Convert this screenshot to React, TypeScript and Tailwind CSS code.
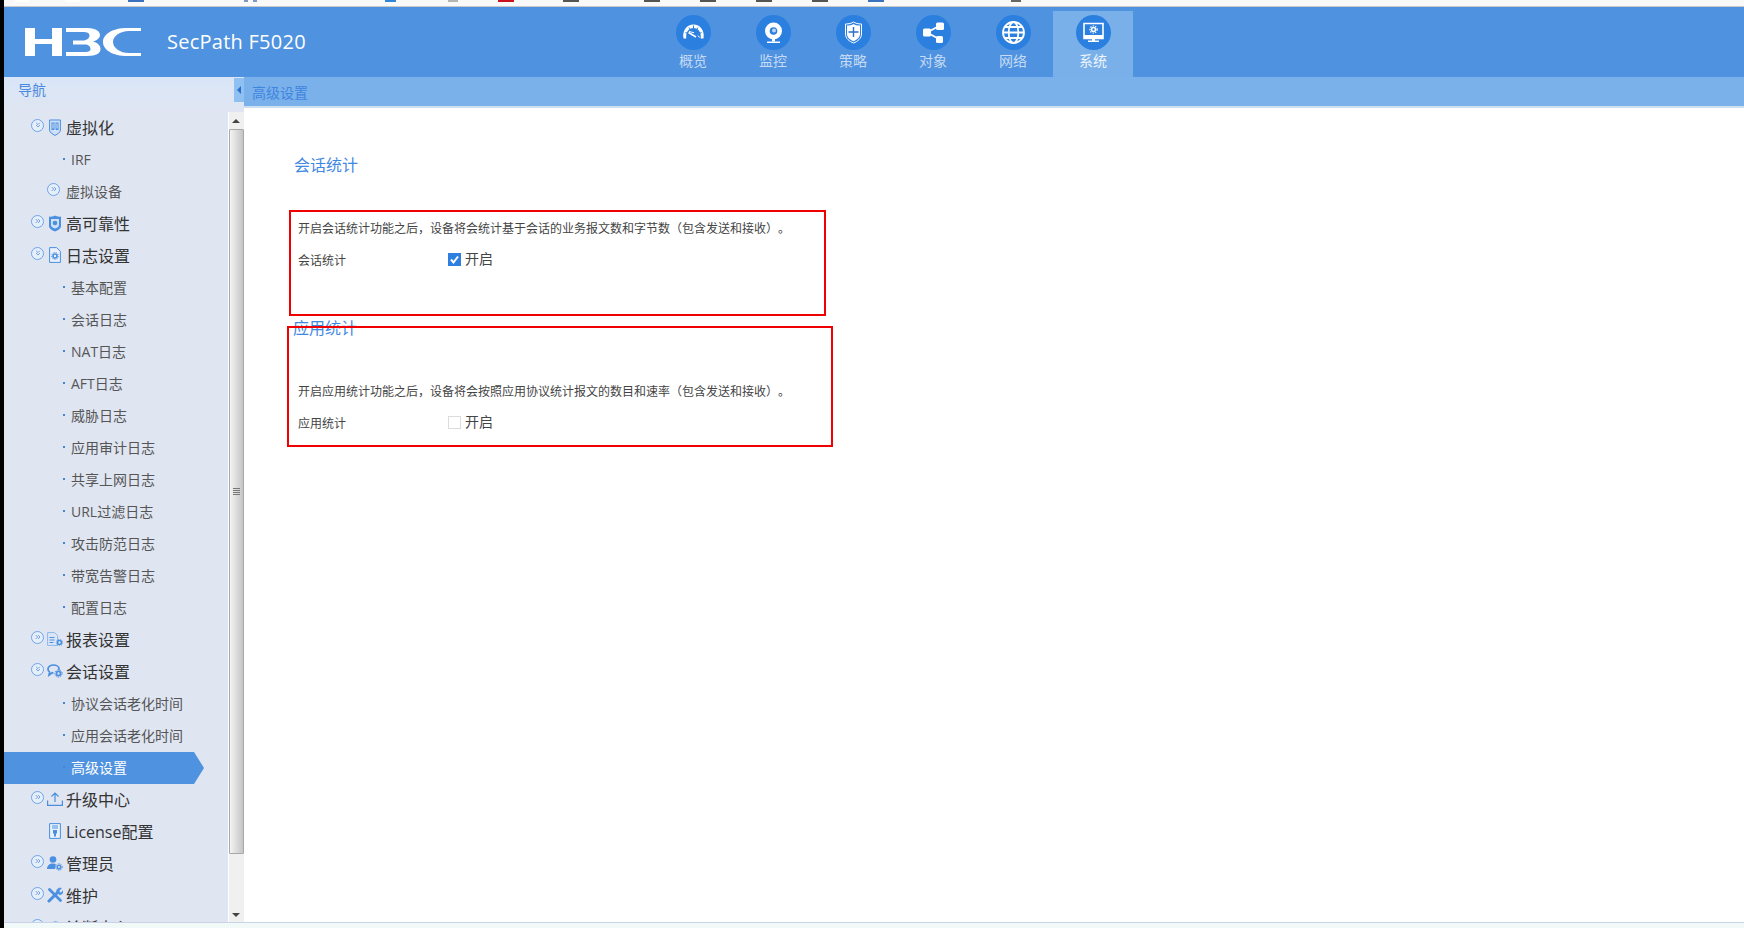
import React from "react";
import { ChevronsDown, ChevronsRight } from "lucide-react";

const BLUE = "#4a8fe0";

const IconShieldVm = () => (
  <svg viewBox="0 0 12 17" className="h-[17px] w-[12px]">
    <path d="M.6 1h10.800v10c0 2.500-2.700 4-5.400 5.400C3.300 15 .6 13.500.6 11z" fill="#cfe0f6" stroke={BLUE} />
    <path d="M2.500 3.500h7v7.500h-7z" fill={BLUE} />
    <path d="M6 3.500V12M4 4.500v5M8 4.500v5" stroke="#fff" strokeWidth="0.8" />
  </svg>
);
const IconShieldStar = () => (
  <svg viewBox="0 0 12 17" className="h-[17px] w-[12px]">
    <path d="M0 1.500C2.500 2 4.500 1.500 6 .5c1.500 1 3.500 1.500 6 1V11c0 2.500-3 4.500-6 5.500C3 15.500 0 13.500 0 11z" fill={BLUE} />
    <path d="M2 4h8v6.500c0 1-2 2.500-4 3-2-.5-4-2-4-3z" fill="#cfe0f6" />
    <circle cx="6" cy="8" r="2.300" fill={BLUE} />
  </svg>
);
const IconDocGear = () => (
  <svg viewBox="0 0 12 16" className="h-[16px] w-[12px]">
    <path d="M.6.6h7l3.800 3.800v11H.6z" fill="#eaf1fb" stroke={BLUE} />
    <circle cx="6" cy="9" r="2" fill="none" stroke={BLUE} strokeWidth="1.600" />
    <circle cx="6" cy="9" r="3.500" fill="none" stroke={BLUE} strokeWidth="0.900" strokeDasharray="1.200 1.200" />
  </svg>
);
const IconReport = () => (
  <svg viewBox="0 0 16 14" className="h-[14px] w-[16px]">
    <path d="M.6.6h7l3 3v9.800H.6z" fill="#dbe7f7" stroke="#8fb5e8" />
    <path d="M2.500 5.500h5M2.500 8h5M2.500 10.500h4" stroke={BLUE} />
    <circle cx="12.500" cy="10.500" r="2" fill="none" stroke={BLUE} strokeWidth="1.600" />
    <circle cx="12.500" cy="10.500" r="3.200" fill="none" stroke={BLUE} strokeWidth="0.800" strokeDasharray="1.100 1.100" />
  </svg>
);
const IconChatGear = () => (
  <svg viewBox="0 0 16 14" className="h-[14px] w-[16px]">
    <path d="M6.500 1c3 0 5.500 1.700 5.500 3.800 0 .4-.1.8-.3 1.200M6.500 8.800c-.4 0-.8 0-1.200-.1L2 11l.6-2.900C1.500 7.300 1 6.200 1 4.900 1 2.700 3.500 1 6.500 1" fill="none" stroke={BLUE} strokeWidth="1.700" />
    <circle cx="11.500" cy="9.500" r="2.100" fill="none" stroke={BLUE} strokeWidth="1.800" />
    <circle cx="11.500" cy="9.500" r="3.700" fill="none" stroke={BLUE} strokeWidth="1" strokeDasharray="1.300 1.300" />
  </svg>
);
const IconUpload = () => (
  <svg viewBox="0 0 16 14" className="h-[14px] w-[16px]" fill="none" stroke={BLUE} strokeWidth="1.200">
    <path d="M.6 8.500v4.900h14.800V8.500M8 10V1M4.500 4.500 8 1l3.500 3.500" />
  </svg>
);
const IconLicense = () => (
  <svg viewBox="0 0 12 16" className="h-[16px] w-[12px]">
    <path d="M.6.6h10.800v14.800H.6z" fill="#eaf1fb" stroke={BLUE} />
    <path d="M3 3h6M3 5h6" stroke={BLUE} />
    <path d="M4 7h4v3.500H7v3H5v-3H4z" fill={BLUE} />
  </svg>
);
const IconAdmin = () => (
  <svg viewBox="0 0 16 15" className="h-[15px] w-[16px]">
    <circle cx="6" cy="3.500" r="3.300" fill={BLUE} />
    <path d="M0 13c0-3.500 2.500-5.500 6-5.500 1 0 2 .2 2.800.6L8 13z" fill={BLUE} />
    <circle cx="12" cy="11" r="1.800" fill="none" stroke={BLUE} strokeWidth="1.500" />
    <circle cx="12" cy="11" r="3.300" fill="none" stroke={BLUE} strokeWidth="1" strokeDasharray="1.200 1.200" />
  </svg>
);
const IconTools = () => (
  <svg viewBox="0 0 16 16" className="h-[16px] w-[16px]" fill="none" stroke={BLUE} strokeLinecap="round">
    <path d="M2 14 11 5" strokeWidth="3" />
    <path d="M9.500 4c.4-2.200 2.800-3.700 5-2.700L12 3.700l.4 1.700 1.700.4 2-2.400c.6 2.200-1.200 4.600-3.700 4.300z" strokeWidth="0.500" fill={BLUE} />
    <path d="m2.500 2.500 11 11" strokeWidth="2.800" />
  </svg>
);
const IconPower = () => (
  <svg viewBox="0 0 16 16" className="h-[15px] w-[15px]" fill="none" stroke="#8fb5e8" strokeWidth="1.600">
    <circle cx="8" cy="8" r="6" />
    <path d="M8 1v7" />
  </svg>
);

type Row = {
  label: string;
  kind: "top" | "sub" | "group";
  open?: boolean;
  noToggle?: boolean;
  active?: boolean;
  icon?: React.ReactNode;
};

const rows: Row[] = [
  { label: "虚拟化", kind: "top", open: true, icon: <IconShieldVm /> },
  { label: "IRF", kind: "sub" },
  { label: "虚拟设备", kind: "group" },
  { label: "高可靠性", kind: "top", icon: <IconShieldStar /> },
  { label: "日志设置", kind: "top", open: true, icon: <IconDocGear /> },
  { label: "基本配置", kind: "sub" },
  { label: "会话日志", kind: "sub" },
  { label: "NAT日志", kind: "sub" },
  { label: "AFT日志", kind: "sub" },
  { label: "威胁日志", kind: "sub" },
  { label: "应用审计日志", kind: "sub" },
  { label: "共享上网日志", kind: "sub" },
  { label: "URL过滤日志", kind: "sub" },
  { label: "攻击防范日志", kind: "sub" },
  { label: "带宽告警日志", kind: "sub" },
  { label: "配置日志", kind: "sub" },
  { label: "报表设置", kind: "top", icon: <IconReport /> },
  { label: "会话设置", kind: "top", open: true, icon: <IconChatGear /> },
  { label: "协议会话老化时间", kind: "sub" },
  { label: "应用会话老化时间", kind: "sub" },
  { label: "高级设置", kind: "sub", active: true },
  { label: "升级中心", kind: "top", icon: <IconUpload /> },
  { label: "License配置", kind: "top", noToggle: true, icon: <IconLicense /> },
  { label: "管理员", kind: "top", icon: <IconAdmin /> },
  { label: "维护", kind: "top", icon: <IconTools /> },
  { label: "诊断中心", kind: "top", icon: <IconPower /> },
];

const Toggle = ({ open }: { open?: boolean }) => (
  <span className="mt-[-6px] flex h-[13px] w-[13px] shrink-0 items-center justify-center rounded-full border-[1.5px] border-[#6ea4e8] bg-[#e6eefa] text-[#6ea4e8]">
    {open ? <ChevronsDown size={8} strokeWidth={3} /> : <ChevronsRight size={8} strokeWidth={3} />}
  </span>
);

const NavRow = ({ row }: { row: Row }) => {
  if (row.kind === "sub") {
    return (
      <div
        className={
          row.active
            ? "flex h-8 w-[200px] items-center bg-[#4f92e0] pl-[59px] text-sm text-white [clip-path:polygon(0_0,190px_0,200px_50%,190px_100%,0_100%)]"
            : "flex h-8 items-center pl-[59px] text-sm text-[#555]"
        }
      >
        <span className="mt-[-2px] h-[2px] w-[2px] bg-[#3f85d8]" />
        <span className="ml-[6px] leading-none">{row.label}</span>
      </div>
    );
  }
  if (row.kind === "group") {
    return (
      <div className="flex h-8 items-center pl-[43px] text-sm text-[#555]">
        <Toggle />
        <span className="ml-[6px] leading-none">{row.label}</span>
      </div>
    );
  }
  return (
    <div className="flex h-8 items-center pl-[27px] text-base text-[#333]">
      {row.noToggle ? <span className="w-[13px]" /> : <Toggle open={row.open} />}
      <span className="ml-[3px] mr-[3px] flex w-[16px] shrink-0 items-center justify-center pb-[2px]">{row.icon}</span>
      <span className="leading-none">{row.label}</span>
    </div>
  );
};

const Scrollbar = () => (
  <div className="flex w-[16px] shrink-0 flex-col border-l border-white bg-[#f0f0f0]">
    <div className="flex h-[17px] items-center justify-center pr-[1px]">
      <span className="h-0 w-0 border-x-[4px] border-b-[4px] border-x-transparent border-b-[#444]" />
    </div>
    <div className="flex h-[725px] items-center justify-center rounded-[1px] border border-[#a8a8a8] bg-gradient-to-r from-[#f4f4f4] via-[#dcdcdc] to-[#c4c4c8] pr-[1px]">
      <div className="flex w-[7px] flex-col gap-px">
        <span className="h-px bg-[#777]" />
        <span className="h-px bg-[#777]" />
        <span className="h-px bg-[#777]" />
        <span className="h-px bg-[#777]" />
      </div>
    </div>
    <div className="flex flex-1 items-end justify-center pb-[5px] pr-[1px]">
      <span className="h-0 w-0 border-x-[4px] border-t-[4px] border-x-transparent border-t-[#444]" />
    </div>
  </div>
);

const Sidebar = () => (
  <aside className="relative flex w-[240px] shrink-0 flex-col bg-[#dfe5f1]">
    <div className="flex h-[35px] shrink-0 items-start bg-gradient-to-b from-[#d9e6f8] to-[#dfe5f1] pl-[14px] pt-[3px] text-sm text-[#4a8ae0]">
      导航
    </div>
    <div className="absolute right-0 top-[1px] flex h-[24px] w-[10px] items-center justify-center bg-[#8fc0f2]">
      <span className="h-0 w-0 border-y-[4px] border-r-[4px] border-y-transparent border-r-[#2b6fc9]" />
    </div>
    <div className="flex min-h-0 flex-1">
      <div className="min-w-0 flex-1 overflow-hidden">
        {rows.map((row) => (
          <NavRow key={row.label} row={row} />
        ))}
      </div>
      <Scrollbar />
    </div>
  </aside>
);

const Gauge = () => (
  <svg viewBox="0 0 35 35" className="h-[35px] w-[35px]">
    <path d="M7.500 23.500C6 15.500 11 9.500 17.500 9.500s11.500 6 10 14h-2.800C25.500 17 22 13 17.500 13S9.500 17 10.300 23.500z" fill="#fff" />
    <path d="M9.500 17.500l2.300 1M13 12.500l1.300 2M17.500 10.500v2.500M22 12.500l-1.300 2M25.500 17.500l-2.300 1" stroke="#2b7fdf" strokeWidth="1" />
    <path d="m12.500 17.500 7.500 4.500" stroke="#fff" strokeWidth="1.500" />
    <path d="M13 16.500l5 1.200M22 20.500l1.500 2" stroke="#fff" strokeWidth="1" />
  </svg>
);
const Webcam = () => (
  <svg viewBox="0 0 35 35" className="h-[35px] w-[35px]">
    <circle cx="17.500" cy="16" r="8.500" fill="#fff" />
    <circle cx="17.500" cy="16" r="3.800" fill="#2b7fdf" />
    <circle cx="18" cy="15.500" r="2" fill="#bcd7f5" />
    <path d="M16 24h3v2.500h-3z" fill="#fff" />
    <path d="M11 26.500h13V28H11z" fill="#fff" />
  </svg>
);
const ShieldPlus = () => (
  <svg viewBox="0 0 35 35" className="h-[35px] w-[35px]">
    <path d="M9.500 9c3.500 0 6-.7 8-2 2 1.300 4.500 2 8 2v10c0 4.500-4 7.500-8 9-4-1.500-8-4.500-8-9z" fill="none" stroke="#fff" strokeWidth="1" />
    <path d="M11 10.500c2.500 0 4.800-.5 6.500-1.500 1.700 1 4 1.500 6.500 1.500V19c0 3.500-3.200 6-6.500 7.300C14.200 25 11 22.500 11 19z" fill="#fff" />
    <path d="M17.500 12v10M12.500 17h10" stroke="#2b6fc9" strokeWidth="1.400" />
  </svg>
);
const ShareNodes = () => (
  <svg viewBox="0 0 35 35" className="h-[35px] w-[35px]">
    <path d="M12 17 23 11M12 18l11 6" stroke="#fff" strokeWidth="1.800" />
    <rect x="7" y="13.500" width="8" height="8" rx="1.500" fill="#fff" />
    <rect x="20" y="7.500" width="8" height="7.500" rx="1.500" fill="#fff" />
    <rect x="20" y="21" width="7" height="7" rx="1.500" fill="#fff" />
  </svg>
);
const Globe = () => (
  <svg viewBox="0 0 35 35" className="h-[35px] w-[35px]" fill="none" stroke="#fff" strokeWidth="1.800">
    <circle cx="17.500" cy="17.500" r="10.500" />
    <ellipse cx="17.500" cy="17.500" rx="4.800" ry="10.500" />
    <path d="M7 17.500h21M8.500 12h18M8.500 23h18" />
  </svg>
);
const MonitorGear = () => (
  <svg viewBox="0 0 35 35" className="h-[35px] w-[35px]">
    <path d="M8 8.500h19v15H8z" fill="none" stroke="#fff" strokeWidth="1.600" />
    <circle cx="17.500" cy="14.500" r="2" fill="none" stroke="#fff" strokeWidth="1.600" />
    <circle cx="17.500" cy="14.500" r="3.600" fill="none" stroke="#fff" strokeWidth="1.200" strokeDasharray="1.300 1.300" />
    <path d="M8 20h19v3.500H8zM16 23.500h3v2h-3zM12 25.500h11V27H12z" fill="#fff" />
  </svg>
);

const tabs = [
  { label: "概览", icon: <Gauge /> },
  { label: "监控", icon: <Webcam /> },
  { label: "策略", icon: <ShieldPlus /> },
  { label: "对象", icon: <ShareNodes /> },
  { label: "网络", icon: <Globe /> },
  { label: "系统", icon: <MonitorGear />, active: true },
];

const Header = () => (
  <header className="flex h-[70px] shrink-0 items-stretch bg-[#4f92e0]">
    <div className="flex w-[649px] shrink-0 items-center pl-[21px]">
      <svg viewBox="0 0 116 28" className="h-[28px] w-[116px]" fill="#fff">
        <path d="M0 0h10v28H0zM27 0h10v28H27zM10 11h17v5H10z" />
        <path d="M41 0h21c10 0 13 4 13 7 0 3-3 5.500-7 6.500 4 1 7.500 3.500 7.500 7.500 0 4-3.500 7-13.500 7H41v-4h19c4 0 5.500-1 5.500-3 0-3-2.500-4.500-5.500-4.500H48v-4h10c4 0 6.500-2.500 6.500-5S62 4 58 4H41z" />
        <path d="M116 0h-14C88 0 78 6 78 14s10 14 24 14h14v-3h-12c-9 0-16-5-16-11S95 3 104 3h12z" />
      </svg>
      <span className="ml-[26px] text-xl leading-none tracking-[0.25px] text-white">SecPath F5020</span>
    </div>
    <nav className="flex pt-[4px]">
      {tabs.map((tab) => (
        <div
          key={tab.label}
          className={
            tab.active
              ? "flex w-[80px] flex-col items-center bg-[#7ab0ea] pt-[4px] text-sm leading-none text-[#eef5fd]"
              : "flex w-[80px] flex-col items-center pt-[4px] text-sm leading-none text-[#c5daf4]"
          }
        >
          <span className="flex h-[35px] w-[35px] items-center justify-center rounded-full bg-[#2b7fdf]">{tab.icon}</span>
          <span className="mt-[4px]">{tab.label}</span>
        </div>
      ))}
    </nav>
  </header>
);

const Section = ({
  title,
  desc,
  label,
  checked,
  className,
  descClass,
  rowClass,
}: {
  title: string;
  desc: string;
  label: string;
  checked: boolean;
  className: string;
  descClass: string;
  rowClass: string;
}) => (
  <section className={className}>
    <h2 className="text-base leading-none font-normal text-[#3f88e2]">{title}</h2>
    <p className={descClass}>{desc}</p>
    <div className={rowClass}>
      <span className="mt-[2px] w-[150px] leading-none">{label}</span>
      {checked ? (
        <span className="flex h-[13px] w-[13px] -translate-y-px items-center justify-center bg-[#2f7fe0]">
          <svg viewBox="0 0 13 13" className="h-[13px] w-[13px]" fill="none" stroke="#fff" strokeWidth="2">
            <path d="m3 6.500 2.500 3L10 3.500" />
          </svg>
        </span>
      ) : (
        <span className="h-[13px] w-[13px] -translate-y-px border border-[#dcdcdc] bg-white" />
      )}
      <span className="ml-[4px] -translate-y-px text-sm leading-none text-[#444]">开启</span>
    </div>
  </section>
);

const TOP_MARKS = [
  "ml-[11px] w-[14px] bg-white",
  "ml-[36px] w-[15px] bg-white",
  "ml-[48px] w-[16px] bg-[#3a72bd]",
  "ml-[100px] w-[4px] bg-[#7d99c4]",
  "ml-[5px] w-[4px] bg-[#7d99c4]",
  "ml-[128px] w-[11px] bg-[#2f86d6]",
  "ml-[52px] w-[10px] bg-[#b5b5b5]",
  "ml-[40px] w-[16px] bg-[#c8121c]",
  "ml-[49px] w-[16px] bg-[#555]",
  "ml-[65px] w-[16px] bg-[#555]",
  "ml-[40px] w-[16px] bg-[#555]",
  "ml-[40px] w-[16px] bg-[#555]",
  "ml-[40px] w-[16px] bg-[#555]",
  "ml-[40px] w-[16px] bg-[#3a72bd]",
  "ml-[127px] w-[10px] bg-[#666]",
];

export default function App() {
  return (
    <div className="flex h-[928px] w-[1744px] overflow-hidden bg-white font-['Open_Sans','Noto_Sans_CJK_SC',sans-serif]">
      <div className="w-[4px] shrink-0 bg-black" />
      <div className="flex min-w-0 flex-1 flex-col">
        <div className="flex h-[7px] shrink-0 items-start border-b border-[#c8c8c8] bg-[#f9f9f9]">
          {TOP_MARKS.map((mark, i) => (
            <span key={i} className={`h-[2px] shrink-0 ${mark}`} />
          ))}
        </div>
        <Header />
        <div className="flex min-h-0 flex-1">
          <Sidebar />
          <main className="relative min-w-0 flex-1">
            <div className="flex h-[31px] items-center border-b-2 border-[#cfdff2] bg-[#7ab1ea] pl-[8px] pt-[2px] text-sm leading-none text-[#3f85e0]">
              高级设置
            </div>
            <Section
              title="会话统计"
              desc="开启会话统计功能之后，设备将会统计基于会话的业务报文数和字节数（包含发送和接收）。"
              label="会话统计"
              checked
              className="pl-[50px] pt-[49px]"
              descClass="mt-[50px] pl-[4px] text-xs leading-none text-[#444] [text-spacing-trim:space-all]"
              rowClass="mt-[18px] flex items-center pl-[4px] text-xs text-[#444]"
            />
            <Section
              title="应用统计"
              desc="开启应用统计功能之后，设备将会按照应用协议统计报文的数目和速率（包含发送和接收）。"
              label="应用统计"
              checked={false}
              className="pl-[49px] pt-[53px]"
              descClass="mt-[50px] pl-[5px] text-xs leading-none text-[#444] [text-spacing-trim:space-all]"
              rowClass="mt-[18px] flex items-center pl-[5px] text-xs text-[#444]"
            />
            {/* annotation boxes drawn over the page */}
            <div className="absolute left-[45px] top-[133px] h-[106px] w-[537px] border-2 border-[#f00000]" />
            <div className="absolute left-[43px] top-[249px] h-[121px] w-[546px] border-2 border-[#f00000]" />
          </main>
        </div>
        <div className="h-[6px] shrink-0 border-t border-[#c9d3e8] bg-[#f2f9f9]" />
      </div>
    </div>
  );
}
